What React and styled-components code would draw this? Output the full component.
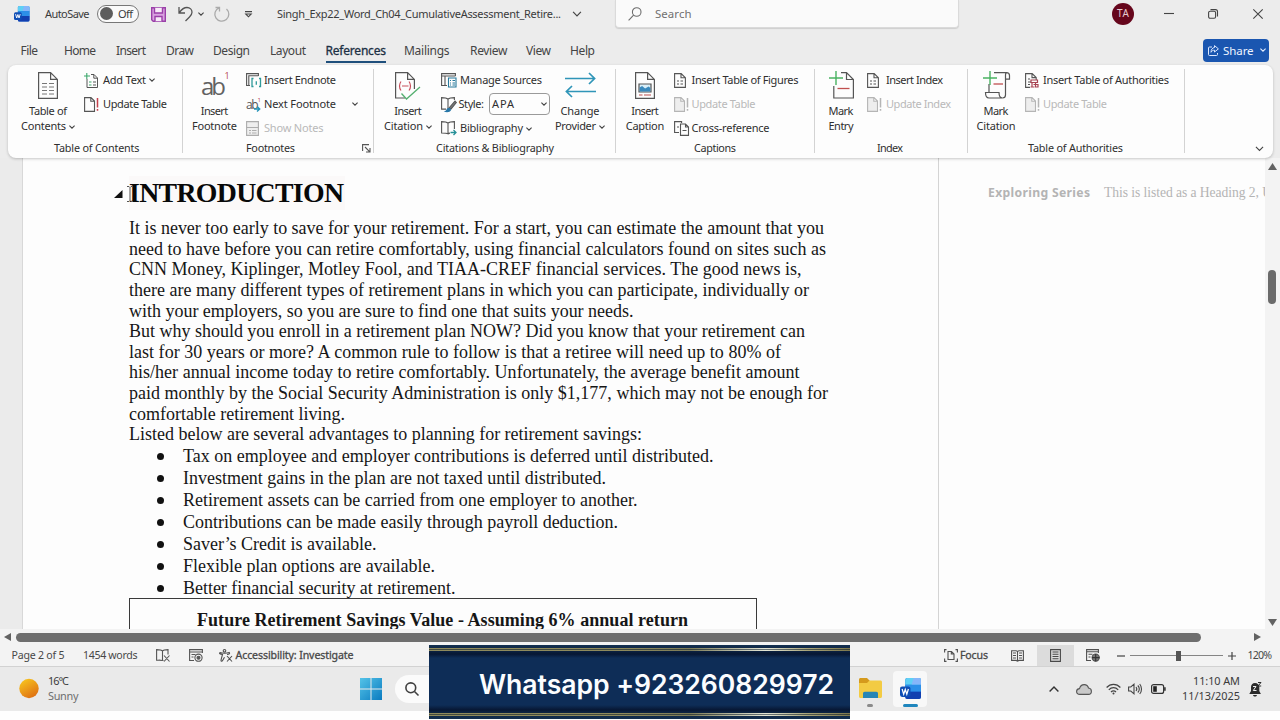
import { useLayoutEffect, useRef, useState } from "react";
import styled, { createGlobalStyle } from "styled-components";


const GlobalStyle = createGlobalStyle`
  * {
    box-sizing: border-box;
  }

  body {
    margin: 0;
    overflow: hidden;
    background: #ffffff;
    font-family: "Noto Sans", "Open Sans", sans-serif;
    font-size: 11px;
    color: #3b3b3b;
  }

  svg {
    display: block;
    flex: none;
    overflow: visible;
  }
`;

const FitBox = styled.span`
  display: block;
  flex: none;
  white-space: pre;
  margin-left: ${p => p.$ml || 0}px;
`;

// Tracks a run of text out (or in) so that it is exactly `w` pixels wide
const Fit = ({ w, ml, children }) => {
    const ref = useRef(null);
    const [spacing, setSpacing] = useState(0);

    useLayoutEffect(() => {
        const range = document.createRange();
        range.selectNodeContents(ref.current);
        const natural = range.getBoundingClientRect().width;
        setSpacing((w - natural) / (children.length - 1 || 1));
    }, []);

    return (
        <FitBox ref={ref} $ml={ml} style={{ width: w, letterSpacing: spacing }}>{children}</FitBox>
    );
};

const Window = styled.div`
  width: 1280px;
  height: 720px;
  position: relative;
  display: flex;
  flex-direction: column;
  overflow: hidden;
  background: #fefefe;
`;

const Header = styled.header`
  height: 158px;
  background: #ececec;
  flex: none;
`;

const TitleBar = styled.div`
  height: 36px;
  display: flex;
  align-items: flex-start;

  ${FitBox} {
    padding-bottom: 1px;
  }
`;

const TitleItem = styled.div`
  height: ${p => p.$h || 28}px;
  margin-left: ${p => p.$ml || 0}px;
  display: flex;
  align-items: center;
  flex: none;
`;

const Toggle = styled.div`
  width: 42px;
  height: 18px;
  border: 1px solid #777;
  border-radius: 9px;
  background: #fafafa;
  display: flex;
  align-items: center;
  padding-left: 2px;
`;

const ToggleKnob = styled.div`
  width: 13px;
  height: 13px;
  border-radius: 50%;
  background: #5d5d5d;
`;

const SearchBox = styled.div`
  width: 344px;
  height: 28px;
  margin-left: 33px;
  padding-left: 12px;
  display: flex;
  align-items: center;
  background: #fafafa;
  border: 1px solid #dadada;
  border-top: none;
  border-radius: 0 0 4px 4px;
  box-shadow: 0 1px 1px #cfcfcf;
  color: #707070;
  font-size: 11.4px;
`;

const Avatar = styled.div`
  width: 22px;
  height: 22px;
  border-radius: 50%;
  background: #66061c;
  color: #e6c9ce;
  display: flex;
  align-items: center;
  justify-content: center;
  font-size: 10px;
`;

const TabRow = styled.nav`
  height: 29px;
  display: flex;
  align-items: center;
  padding-left: 20.5px;
  font-size: 12px;
`;

const Tab = styled.div`
  height: 25px;
  margin-left: ${p => p.$ml || 0}px;
  padding-top: 4px;
  line-height: 18px;
  border-bottom: 2px solid ${p => (p.$active ? "#1f4f7c" : "transparent")};
  color: ${p => (p.$active ? "#1c3044" : "#444")};
  -webkit-text-stroke: ${p => (p.$active ? "0.3px" : "0")};
`;

const ShareButton = styled.button`
  width: 66px;
  height: 23px;
  margin: 0 11px 1px auto;
  padding: 0 0 0 5px;
  display: flex;
  align-items: center;
  border: none;
  border-radius: 4px;
  background: #1a56b0;
  color: #eef4ff;
  font: inherit;
  font-size: 11.5px;
`;

const Ribbon = styled.div`
  width: 1265px;
  height: 93px;
  margin-left: 8px;
  display: flex;
  background: #fdfdfd;
  border-radius: 8px;
  box-shadow: 0 1px 3px rgba(0, 0, 0, 0.22);
  color: #2f2f2f;
  position: relative;
  z-index: 1;

  ${FitBox} {
    padding-bottom: 2px;
  }
`;

const Group = styled.section`
  width: ${p => p.$w}px;
  padding-top: 3px;
  flex: none;
`;

const GroupBody = styled.div`
  height: 73px;
  padding-left: ${p => p.$pl}px;
  display: flex;
`;

const GroupLabel = styled.div`
  height: 15px;
  padding-left: ${p => p.$pl}px;
  display: flex;
  align-items: center;
  font-size: 10.8px;
`;

const Divider = styled.div`
  width: 1px;
  height: 84px;
  margin-top: 4px;
  background: #d3d3d3;
  flex: none;
`;

const BigButton = styled.div`
  width: ${p => p.$w}px;
  padding-top: 3px;
  display: flex;
  flex-direction: column;
  align-items: center;
  flex: none;
`;

const BigIcon = styled.div`
  height: 33px;
  padding-top: 1px;
  display: flex;
  align-items: flex-start;
`;

const BigLine = styled.div`
  height: 15px;
  display: flex;
  align-items: center;
`;

const Stack = styled.div`
  width: ${p => (p.$w ? p.$w + "px" : "auto")};
  margin-left: ${p => p.$ml}px;
  display: flex;
  flex-direction: column;
`;

const SmallButton = styled.div`
  height: 24.4px;
  display: flex;
  align-items: center;
  color: ${p => (p.$disabled ? "#b9b9b9" : "inherit")};
`;

const IconSlot = styled.div`
  width: 16px;
  flex: none;
`;

const Combo = styled.div`
  width: 61px;
  height: 22px;
  margin-left: 5px;
  padding-left: 2px;
  border: 1px solid #9a9a9a;
  border-radius: 4px;
  display: flex;
  align-items: center;
`;

const Workspace = styled.main`
  height: 471px;
  display: flex;
  flex: none;
`;

const Gutter = styled.div`
  width: 23px;
  background: #ebebeb;
  border-right: 1px solid #d8d8d8;
`;

const Page = styled.article`
  width: 916px;
  padding: 18px 0 0 106px;
  overflow: hidden;
  border-right: 1px solid #d4d4d4;
  background: #fdfdfd;
  font-family: "Liberation Serif", "Times New Roman", serif;
  font-size: 18px;
  color: #161616;
`;

const Heading = styled.h1`
  width: 216px;
  height: 34px;
  margin: 0 0 8px;
  position: relative;
  background: #fbf9f9;
  font-size: 27.8px;
  font-weight: 700;
  line-height: 34px;
  color: #080808;
`;

const CollapseMark = styled.svg`
  position: absolute;
  left: -15px;
  top: 14px;
`;

const TextCursor = styled.svg`
  position: absolute;
  left: -2px;
  top: 10px;
`;

const Line = styled.div`
  height: 20.63px;
  line-height: 21px;
`;

const Bullets = styled.ul`
  margin: 0;
  padding: 0;
  list-style: none;
`;

const Bullet = styled.li`
  height: 22px;
  display: flex;
  align-items: center;
  line-height: 22px;

  &::before {
    content: "";
    width: 7px;
    height: 7px;
    margin: 2px 19px 0 28px;
    border-radius: 50%;
    background: #111;
  }
`;

const TableTop = styled.div`
  width: 628px;
  height: 60px;
  margin-top: -1px;
  padding: 10px 0 0 67px;
  border: 1px solid #3a3a3a;
  font-weight: 700;
  line-height: 22px;
`;

const CommentPane = styled.aside`
  width: 326px;
  padding: 25px 0 0 49px;
  display: flex;
  overflow: hidden;
  background: #fdfdfd;
  color: #b4b4b4;
  line-height: 20px;
`;

const CommentAuthor = styled.div`
  font-size: 12.2px;
  font-weight: 700;
`;

const CommentText = styled.div`
  margin-left: 14px;
  font-family: "Liberation Serif", serif;
  font-size: 13.6px;
  line-height: 19px;
`;

const VScroll = styled.div`
  width: 15px;
  padding: 5px 0 3px 3px;
  display: flex;
  flex-direction: column;
  background: #f3f3f3;
`;

const VThumb = styled.div`
  width: 8px;
  height: 34px;
  margin: 100px 0 auto 0;
  border-radius: 4px;
  background: #6b6b6b;
`;

const HScroll = styled.div`
  height: 16px;
  padding-left: 4px;
  display: flex;
  align-items: center;
  background: #f3f3f3;
  flex: none;
`;

const HThumb = styled.div`
  width: 1185px;
  height: 9px;
  margin: 0 53px 0 5px;
  border-radius: 5px;
  background: #6e6e6e;
`;

const StatusBar = styled.div`
  height: 22px;
  padding-left: 11.5px;
  display: flex;
  align-items: center;
  background: #f3f3f3;
  border-bottom: 1px solid #d2d2d2;
  color: #484848;
  font-size: 10.6px;
  flex: none;

  ${FitBox} {
    padding-bottom: 1px;
  }
`;

const StatusItem = styled.div`
  margin-left: ${p => p.$ml || 0}px;
  -webkit-text-stroke: ${p => (p.$strong ? "0.3px" : "0")};
  flex: none;
`;

const ActiveView = styled.div`
  width: 37px;
  height: 21px;
  margin-left: 13px;
  display: flex;
  align-items: center;
  justify-content: center;
  background: #dcdcdc;
`;

const ZoomTrack = styled.div`
  width: 93px;
  height: 10px;
  margin-left: 5px;
  display: flex;
  align-items: center;
  background: linear-gradient(#858585, #858585) center / 100% 1px no-repeat;
`;

const ZoomThumb = styled.div`
  width: 5px;
  height: 10px;
  margin-left: 46px;
  background: #555;
`;

const Taskbar = styled.footer`
  height: 44px;
  padding-left: 19px;
  display: flex;
  align-items: center;
  background: #eaeaea;
  flex: none;
`;

const TaskItem = styled.div`
  margin-left: ${p => p.$ml || 0}px;
  flex: none;
`;

const TwoLines = styled.div`
  width: ${p => p.$w}px;
  margin-left: ${p => p.$ml}px;
  padding-bottom: 2px;
  display: flex;
  flex-direction: column;
  align-items: ${p => (p.$end ? "flex-end" : "flex-start")};
  line-height: 15px;
  font-size: 10.9px;
  flex: none;
`;

const Muted = styled.div`
  color: #6f6f6f;
`;

const SearchPill = styled.div`
  width: 60px;
  height: 28px;
  margin-left: 13px;
  padding-left: 10px;
  display: flex;
  align-items: center;
  border-radius: 14px;
  background: #fbfbfb;
`;

const TaskApp = styled.div`
  width: 34px;
  height: 36px;
  margin-left: ${p => p.$ml}px;
  padding-top: 7px;
  display: flex;
  flex-direction: column;
  align-items: center;
  justify-content: space-between;
  border-radius: 4px;
  background: ${p => (p.$active ? "#f8f8f8" : "transparent")};
  flex: none;
`;

const RunningMark = styled.div`
  width: ${p => (p.$active ? 15 : 6)}px;
  height: 3px;
  border-radius: 2px;
  background: ${p => (p.$active ? "#1f86bd" : "#8a8a8a")};
`;

const Banner = styled.div`
  position: absolute;
  left: 429px;
  top: 645px;
  width: 421px;
  height: 74px;
  padding: 3px 0;
  display: flex;
  flex-direction: column;
  justify-content: space-between;
  background: linear-gradient(
    #14304f 0, #10294a 3px, #0b2140 6px, #071733 9px, #0e2d57 13px,
    #0e2d57 60px, #071733 65px, #0b2140 67px, #14304f 74px
  );
  color: #fbfdff;
`;

const BannerText = styled.div`
  padding: 3px 0 0 50px;
  font-family: Inter, "Open Sans", sans-serif;
  font-size: 26.6px;
  font-weight: 600;
  line-height: 36px;
`;

const GoldRule = styled.div`
  height: 3px;
  display: flex;
  align-items: center;
  background: linear-gradient(90deg, #8f8a5c, #8f8a5c 45%, #7d7c58 62%, #e4e6d6 80%, #a8a377 90%, #7d774c);
`;

const GoldGroove = styled.div`
  flex: 1;
  height: 1px;
  background: rgba(8, 24, 40, 0.55);
`;

/* Icons */

const Caret = ({ color = "#444", w = 6 }) => (
    <svg width={w} height={w / 2 + 1} viewBox="0 0 6 4" fill="none" stroke={color} strokeWidth={w > 6 ? 0.8 : 1.1}>
        <path d="M.4.6 3 3.2 5.6.6" />
    </svg>
);

const WordLogo = ({ size }) => (
    <svg width={size} height={size} viewBox="0 0 20 20">
        <rect x="5" y="0" width="15" height="20" rx="2" fill="#1b6fd6" />
        <path d="M7 0h11a2 2 0 0 1 2 2v4.500H5V2a2 2 0 0 1 2-2z" fill="#5fd0f5" />
        <path d="M13 0h5a2 2 0 0 1 2 2v4.500h-9z" fill="#86b6fa" />
        <path d="M5 6.500h15V13H5z" fill="#2c8fe8" />
        <path d="M5 13h15v5a2 2 0 0 1-2 2H7a2 2 0 0 1-2-2z" fill="#123fb0" />
        <rect x="0" y="8" width="10" height="10" rx="2" fill="#0f4eb5" />
        <path d="m2 10.500 1.500 5L5 11l1.500 4.500 1.500-5" fill="none" stroke="#fff" strokeWidth="1.200" />
    </svg>
);

const SaveIcon = () => (
    <svg width="15" height="15" viewBox="0 0 15 15" fill="none" stroke="#9a3fa8" strokeWidth="1.4">
        <path d="M.7.7h13.600v13.600H2.200L.7 12.800z" fill="#d9a3e0" />
        <path d="M3.500.7v5.300h8V.7M4 14.300V9.500h7v4.800" fill="#f7eaf8" />
    </svg>
);

const UndoIcon = () => (
    <svg width="15" height="16" viewBox="0 0 15 16" fill="none" stroke="#555" strokeWidth="1.3">
        <path d="M1 1v6h6M1.300 6.700C3.500 3.500 6 1.500 9 1.500c3 0 5 2.300 5 4.800 0 2.200-1.200 3.400-2.500 4.700L7.500 15" />
    </svg>
);

const RedoIcon = () => (
    <svg width="16" height="16" viewBox="0 0 16 16" fill="none" stroke="#aaa" strokeWidth="1.3">
        <path d="M5 1.800A7 7 0 1 0 12.500 3M1.500 1.500H5.500V5.500" />
    </svg>
);

const CustomizeIcon = () => (
    <svg width="7" height="7" viewBox="0 0 7 7" fill="none" stroke="#444" strokeWidth="1.1">
        <path d="M0 .6h7M.8 3 3.500 5.800 6.200 3z" />
    </svg>
);

const Magnifier = () => (
    <svg width="14" height="14" viewBox="0 0 14 14" fill="none" stroke="#6c6c6c" strokeWidth="1.1">
        <circle cx="8.700" cy="5" r="4.300" />
        <path d="M5.600 8.200.6 13.300" />
    </svg>
);

const ShareIcon = () => (
    <svg width="11" height="11" viewBox="0 0 11 11" fill="none" stroke="#dce8ff" strokeWidth="1">
        <path d="M4 2H1.500a1 1 0 0 0-1 1v6.500a1 1 0 0 0 1 1h7a1 1 0 0 0 1-1V8" />
        <path d="M6.500.6 10.400 3.900 6.500 7V5.200C4.800 5.200 3.700 5.900 3 7.300c.1-2.800 1.300-4.500 3.500-4.800z" />
    </svg>
);

const ContentsIcon = () => (
    <svg width="20" height="27" viewBox="0 0 20 27" fill="none" stroke="#555" strokeWidth="1.2">
        <path d="M.6.600h12l6.800 6.800v19H.6zM12.600.600v6.800h6.800" />
        <path d="M4 11.500h5M4 15h5M4 18.500h5M4 22h5M11 11.500h5M11 15h5M11 18.500h5M11 22h5" stroke="#777" strokeWidth="1" />
    </svg>
);

const AddTextIcon = () => (
    <svg width="15" height="15" viewBox="0 0 15 15" fill="none" stroke="#555" strokeWidth="1">
        <path d="M7 1.500h3l3.500 3.500v9.500H3V6M9.800 1.500v3.700h3.700" />
        <path d="M2.800 0v6M0 3h6M5 9h2.500M5 12h2.500" stroke="#3aa76a" strokeWidth="1.1" />
        <path d="M9 9h3M9 12h3" />
    </svg>
);

const UpdateIcon = ({ disabled }) => (
    <svg width="15" height="15" viewBox="0 0 15 15" fill="none" stroke={disabled ? "#b5b5b5" : "#555"} strokeWidth="1.1">
        <path d="M.6.6h6.400l3.500 3.500v10.300H.6zM6.800.6v3.700h3.700" fill={disabled ? "#eee" : "none"} />
        <path d="M13.500 1v9.500M13.500 12v1.800" stroke={disabled ? "#b5b5b5" : "#c5404c"} strokeWidth="1.500" />
    </svg>
);

const SerialText = styled.text`
  font-family: "Open Sans", sans-serif;
  stroke: none;
`;

const FootnoteIcon = () => (
    <svg width="28" height="27" viewBox="0 0 28 27">
        <SerialText x="0" y="23" fontSize="24" fontWeight="400" textLength="25" fill="#626262">ab</SerialText>
        <SerialText x="23.500" y="6.500" fontSize="9" fill="#b64450">1</SerialText>
    </svg>
);

const EndnoteIcon = () => (
    <svg width="16" height="15" viewBox="0 0 16 15" fill="none" stroke="#555" strokeWidth="1.1">
        <path d="M4 12.500H.6V.6h11.800V3M2.800 12V2.800h9.600" />
        <path d="M7.500 5.500H6v8h1.500M13 5.500h1.500v8H13M10.300 8.300v3.500" stroke="#2f9a9a" strokeWidth="1.300" />
    </svg>
);

const NextNoteIcon = () => (
    <svg width="16" height="15" viewBox="0 0 16 15">
        <SerialText x="0" y="11.500" fontSize="12" textLength="12.500" fill="#555">ab</SerialText>
        <SerialText x="11.500" y="5" fontSize="6" fill="#b64450">1</SerialText>
        <path d="M8 12h5.500M11 9.500l2.700 2.500-2.700 2.500" fill="none" stroke="#2593b8" strokeWidth="1.400" />
    </svg>
);

const NotesIcon = () => (
    <svg width="13" height="15" viewBox="0 0 13 15" fill="none" stroke="#adadad" strokeWidth="1.1">
        <path d="M.6.6h11.800v13.800H.6z" fill="#efefef" />
        <path d="M.6 6.500h11.800M3 9.500h2M6 9.500h4.500M3 12h2M6 12h4.500" />
    </svg>
);

const LauncherIcon = () => (
    <svg width="9" height="9" viewBox="0 0 9 9" fill="none" stroke="#555" strokeWidth="1.1">
        <path d="M.6 7V.6H7M3 3l4.800 4.800M8 4v4H4" />
    </svg>
);

const CitationIcon = () => (
    <svg width="26" height="28" viewBox="0 0 26 28" fill="none" stroke="#555" strokeWidth="1.2">
        <path d="M10 26H.6V.600h12l6.800 6.800V17M12.600.600v6.800h6.800" />
        <path d="M6 9.500c-2 2.500-2 6.500 0 9M14 9.500c2 2.500 2 6.500 0 9M7 14h6.500" stroke="#c8505c" />
        <path d="m6.500 21.500 5 5.500L25 15" stroke="#55b070" strokeWidth="1.300" />
    </svg>
);

const SourcesIcon = () => (
    <svg width="16" height="15" viewBox="0 0 16 15" fill="none" stroke="#555" strokeWidth="1.1">
        <path d="M6 12.500H.6V.6h13.800V3M.6 3h13.800M4 3v9.500" />
        <path d="M7.500 5h7.500v9H7.500z" stroke="#27799c" />
        <path d="M9 7.500h1M11.500 7.500h2.500M9 10h1M11.500 10h2.500M9 12h1M11.500 12h2.500" stroke="#27799c" />
    </svg>
);

const StyleIcon = () => (
    <svg width="16" height="15" viewBox="0 0 16 15" fill="none" stroke="#555" strokeWidth="1.1">
        <path d="M7 2.500V13M7 2.200C5.500.8 3 .6.6.6v11.500H5M7 2.200C8.500.8 11 .6 13.400.6V3" />
        <path d="m8 11 6-7 1.300 1.500L10 12z" fill="#777" />
        <path d="M4.500 14.500c1-.5 1.300-1.500 1.800-2.300.8-1 2.500-1 3 .2.500 1.600-1.800 2.600-4.800 2.100z" fill="#2777a8" stroke="#2777a8" />
    </svg>
);

const BibliographyIcon = () => (
    <svg width="16" height="15" viewBox="0 0 16 15" fill="none" stroke="#555" strokeWidth="1.1">
        <path d="M7 2.200v10.600C5.500 12 3 12 .6 12V.6C3 .6 5.500.8 7 2.200zM7 2.200C8.500.8 11 .6 13.400.6V8M7 12.800c.6-.4 1.200-.6 2-.7" />
        <path d="M9.500 11.500H15M12.500 9l2.500 2.500-2.500 2.500" stroke="#279098" strokeWidth="1.300" />
    </svg>
);

const SwapIcon = () => (
    <svg width="31" height="26" viewBox="0 0 31 26" fill="none" stroke="#2f95b8" strokeWidth="1.7">
        <path d="M0 6.500h29M24 1l5.600 5.500L24 12M31 19.500H2M7 14l-5.600 5.500L7 25" />
    </svg>
);

const CaptionIcon = () => (
    <svg width="20" height="27" viewBox="0 0 20 27" fill="none" stroke="#555" strokeWidth="1.2">
        <path d="M.6.600h12l6.800 6.800v19H.6zM12.600.600v6.800h6.800" />
        <path d="M4 12h12v8H4z" fill="#d8eef8" />
        <path d="M4.600 19.400v-4l2.500-1.500 3 2.500 3.500-2 1.800 1.500v3.500z" fill="#3989bd" stroke="none" />
        <path d="M4 23h3.500M9 23h7" stroke="#bb4e4e" />
    </svg>
);

const FiguresIcon = () => (
    <svg width="12" height="15" viewBox="0 0 12 15" fill="none" stroke="#555" strokeWidth="1.1">
        <path d="M.6.6h6.600l4.200 4.200v9.600H.6zM7 .6v4.200h4.400M3 8h2M6.500 8H9M3 11h2M6.500 11H9" />
    </svg>
);

const CrossRefIcon = () => (
    <svg width="15" height="15" viewBox="0 0 15 15" fill="none" stroke="#555" strokeWidth="1.1">
        <path d="M5 11.500H.6V.6h7V2M3 6h2" />
        <path d="M6.500 3h5l3 3v8.400h-8zM11.500 3v3h3M8.500 9.500h4" />
    </svg>
);

const MarkEntryIcon = () => (
    <svg width="25" height="28" viewBox="0 1 25 28" fill="none" stroke="#555" strokeWidth="1.2">
        <path d="M12 1.600h5.500l6.900 6.900v18.500H4.800V15M17.500 1.600v6.900h6.900" />
        <path d="M7 0v14M0 7h14" stroke="#49b261" strokeWidth="1.400" />
        <path d="M8.500 17.500h12" stroke="#c0504f" strokeWidth="1.300" />
    </svg>
);

const MarkCitationIcon = () => (
    <svg width="27" height="28" viewBox="0 1 27 28" fill="none" stroke="#555" strokeWidth="1.2">
        <path d="M11 1.600h12.500c2 0 3 1.400 3 3v3.600h-4V24c0 2-1 3-3 3M22.500 8V4c0-1.500.4-2.400 1.400-2.400M6 13v8.500" />
        <path d="M2.500 21.500h13.500c0 3 .8 5.500 3.500 5.500H6c-2.500 0-3.500-2.500-3.500-5.500z" />
        <path d="M7 0v14M0 7h14" stroke="#49b261" strokeWidth="1.400" />
        <path d="M10.500 13h9.500" stroke="#c0504f" strokeWidth="1.300" />
    </svg>
);

const AuthoritiesIcon = () => (
    <svg width="14" height="15" viewBox="0 0 14 15" fill="none" stroke="#555" strokeWidth="1.1">
        <path d="M5 14.400H.6V.6h6.600l4 4V7M7 .6v4h4M3 6h2M3 9h3M3 11.500h2" />
        <path d="M6 7h6.500v2.500H6zM7 9.500v4M10.500 9.500v4M5.500 14h4M8.500 11.500h4.500v2.500h-3" stroke="#a84352" strokeWidth="1.200" />
    </svg>
);

const Arrow = ({ d, w, h }) => (
    <svg width={w} height={h} viewBox={`0 0 ${w} ${h}`} fill="#626262">
        <path d={d} />
    </svg>
);

const ProofIcon = () => (
    <svg width="14" height="13" viewBox="0 0 14 13" fill="none" stroke="#555" strokeWidth="1.1">
        <path d="M6.500 2v9.500M6.500 11.500C5 11 3 11.200.6 11.200V.6C3 .6 5.500.6 6.500 2 7.500.6 9.500.6 12 .6v5M6.500 11.500h1M8 6.500l5.500 6M13.500 6.500 8 12.500" />
    </svg>
);

const MacroIcon = () => (
    <svg width="14" height="13" viewBox="0 0 14 13" fill="none" stroke="#555" strokeWidth="1.1">
        <path d="M5 11.500H.6V.6h12.800V4M.6 3h12.800M2.500 5.500h4M2.500 8h2" />
        <circle cx="9.500" cy="8.700" r="3.600" />
        <circle cx="9.500" cy="8.700" r="1.500" fill="#555" />
    </svg>
);

const AccessIcon = () => (
    <svg width="14" height="13" viewBox="0 0 14 13" fill="none" stroke="#505050" strokeWidth="1.1">
        <circle cx="5.500" cy="1.800" r="1.300" />
        <path d="M.8 3.500C0 4.500 1 5.300 3.500 5.500L2 11c-.2 1.300 1 1.600 1.600.5L5.500 8.300M.8 3.500c3 1 6.500 1 9.500 0 .8 1 0 1.800-2.300 2M8 7l5 5.500M13 7l-5 5.500" />
    </svg>
);

const FocusIcon = () => (
    <svg width="14" height="13" viewBox="0 0 14 13" fill="none" stroke="#505050" strokeWidth="1.100">
        <path d="M2.500.6H.6v3M11.500.6h1.900v3M2.500 12.400H.6v-3M11.500 12.400h1.900v-3" />
        <path d="M4 2.500h3.500L10 5v5.500H4zM7.300 2.500V5H10" />
    </svg>
);

const ReadIcon = () => (
    <svg width="13" height="12" viewBox="0 0 13 12" fill="none" stroke="#505050" strokeWidth="1.1">
        <path d="M6.500 1.500v9.500M.6.800h4.500l1.400.7 1.400-.7h4.500v9.600H7.900l-1.400.8-1.400-.8H.6zM2 3h3M2 5.500h3M2 8h3M8 3h3M8 5.500h3M8 8h3" />
    </svg>
);

const PrintIcon = () => (
    <svg width="11" height="13" viewBox="0 0 11 13" fill="none" stroke="#484848" strokeWidth="1.1">
        <path d="M.6.6h9.800v11.800H.6zM2.500 3h6M2.500 5.200h6M2.500 7.500h6M2.500 9.800h6" />
    </svg>
);

const WebIcon = () => (
    <svg width="14" height="13" viewBox="0 0 14 13" fill="none" stroke="#505050" strokeWidth="1.1">
        <path d="M5 11.500H.6V.6h11.800V4M.6 2.800h11.800M2.500 5.300h4M2.500 8h2" />
        <circle cx="9.700" cy="8.600" r="3.600" fill="#777" />
        <path d="M6 8.600h7.400M9.700 5v7.300" stroke="#333" />
    </svg>
);

const SunIcon = () => (
    <svg width="20" height="20" viewBox="0 0 20 20">
        <defs>
            <linearGradient id="sun" x1="0.200" y1="0" x2="0.800" y2="1">
                <stop offset="0" stopColor="#f8c51f" />
                <stop offset="1" stopColor="#dd6b12" />
            </linearGradient>
        </defs>
        <circle cx="10" cy="9.500" r="9.700" fill="url(#sun)" />
    </svg>
);

const WindowsIcon = () => (
    <svg width="22" height="22" viewBox="0 0 22 22">
        <defs>
            <linearGradient id="win" x1="0" y1="0" x2="1" y2="1" gradientUnits="objectBoundingBox">
                <stop offset="0" stopColor="#54c3e8" />
                <stop offset="1" stopColor="#0a7bc0" />
            </linearGradient>
        </defs>
        <path d="M0 0h10.500v10.500H0zM11.500 0H22v10.500H11.500zM0 11.500h10.500V22H0zM11.500 11.500H22V22H11.500z" fill="url(#win)" />
    </svg>
);

const TaskSearchIcon = () => (
    <svg width="14" height="14" viewBox="0 0 14 14" fill="none" stroke="#404040" strokeWidth="1.6">
        <circle cx="5.800" cy="5.800" r="4.900" />
        <path d="m9.500 9.500 4 4" />
    </svg>
);

const FolderIcon = () => (
    <svg width="23" height="20" viewBox="0 0 23 20">
        <path d="M0 1.500C0 .7.700 0 1.500 0H8l2.500 2.500v4H0z" fill="#d59a1c" />
        <path d="M0 5h8l2.500-2.500h11c.8 0 1.500.7 1.500 1.500v14.500c0 .8-.7 1.500-1.500 1.500h-20C.7 20 0 19.300 0 18.500z" fill="#f3cb43" />
        <path d="M4 20v-4.500c0-1 .7-1.700 1.700-1.700h11.600c1 0 1.700.7 1.700 1.700V20z" fill="#2785b5" />
    </svg>
);

const ChevronUp = () => (
    <svg width="10" height="6" viewBox="0 0 10 6" fill="none" stroke="#333" strokeWidth="1.4">
        <path d="M.6 5.400 5 1l4.400 4.400" />
    </svg>
);

const CloudIcon = () => (
    <svg width="16" height="11" viewBox="0 0 16 11" fill="#c9c9c9" stroke="#555" strokeWidth="1.100">
        <path d="M4 10.400C2 10.400.6 9.200.6 7.500S2 4.700 3.500 4.600C4.200 2 6 .6 8.200.6c2.200 0 3.800 1.300 4.300 3.400 1.700.2 2.900 1.400 2.900 3.200s-1.300 3.200-3 3.200z" />
    </svg>
);

const WifiIcon = () => (
    <svg width="15" height="12" viewBox="0 0 15 12" fill="none" stroke="#444" strokeWidth="1.2">
        <path d="M.6 4.500C4.500.2 10.500.2 14.400 4.500M2.800 6.800c2.700-3 6.700-3 9.400 0M5 9c1.500-1.600 3.500-1.600 5 0" />
        <circle cx="7.500" cy="10.600" r="1" fill="#444" stroke="none" />
    </svg>
);

const SpeakerIcon = () => (
    <svg width="14" height="12" viewBox="0 0 14 12" fill="none" stroke="#444" strokeWidth="1.1">
        <path d="M.6 4h2.200L6 1.200v9.600L2.800 8H.6zM8 4c1 1.200 1 2.800 0 4M9.800 2.500c2 2 2 5 0 7M11.700 1c2.400 2.800 2.400 7.200 0 10" />
    </svg>
);

const BatteryIcon = () => (
    <svg width="15" height="10" viewBox="0 0 15 10" fill="none" stroke="#333" strokeWidth="1.200">
        <rect x=".6" y=".6" width="12" height="8.800" rx="2" />
        <path d="M2.200 2.200h3.600v5.600H2.200z" fill="#222" stroke="none" />
        <path d="M13.900 3.200v3.600" strokeWidth="1.600" />
    </svg>
);

const BellIcon = () => (
    <svg width="13" height="15" viewBox="0 0 13 15">
        <path d="M6 1C3.500 1 2 2.800 2 5v4L.3 12h11.600L10.300 9V5C10.300 2.800 8.500 1 6 1zM4 13h4c-.3 1-1 1.600-2 1.600S4.300 14 4 13z" fill="#2b2b2b" />
        <path d="M4 4.500h3L4.300 8.500h3.200" stroke="#eee" fill="none" />
        <path d="M9 .5h3l-3 3.500h3.200" stroke="#2b2b2b" fill="none" />
    </svg>
);

/* Data */

const TABS = [
    ["File", 17.5, 0], ["Home", 32, 26], ["Insert", 30, 20], ["Draw", 28, 20],
    ["Design", 37, 19], ["Layout", 36, 20], ["References", 60.5, 19.5], ["Mailings", 45.500, 18],
    ["Review", 37.5, 20.5], ["View", 25, 18.5], ["Help", 25, 19],
];

const BODY = [
    ["It is never too early to save for your retirement. For a start, you can estimate the amount that you", 695],
    ["need to have before you can retire comfortably, using financial calculators found on sites such as", 697],
    ["CNN Money, Kiplinger, Motley Fool, and TIAA-CREF financial services. The good news is,", 672.5],
    ["there are many different types of retirement plans in which you can participate, individually or", 680],
    ["with your employers, so you are sure to find one that suits your needs.", 504.5],
    ["But why should you enroll in a retirement plan NOW? Did you know that your retirement can", 676],
    ["last for 30 years or more? A common rule to follow is that a retiree will need up to 80% of", 652],
    ["his/her annual income today to retire comfortably. Unfortunately, the average benefit amount", 670.5],
    ["paid monthly by the Social Security Administration is only $1,177, which may not be enough for", 699],
    ["comfortable retirement living.", 216],
    ["Listed below are several advantages to planning for retirement savings:", 513],
];

const ADVANTAGES = [
    ["Tax on employee and employer contributions is deferred until distributed.", 530.5],
    ["Investment gains in the plan are not taxed until distributed.", 423],
    ["Retirement assets can be carried from one employer to another.", 454.5],
    ["Contributions can be made easily through payroll deduction.", 435],
    ["Saver’s Credit is available.", 193.5],
    ["Flexible plan options are available.", 252],
    ["Better financial security at retirement.", 272.5],
];

/* Parts */

const Big = ({ w, icon, top, topW, bottom, bottomW, caret }) => (
    <BigButton $w={w}>
        <BigIcon>{icon}</BigIcon>
        <BigLine><Fit w={topW}>{top}</Fit></BigLine>
        <BigLine>
            <Fit w={bottomW}>{bottom}</Fit>
            {caret && <TitleItem $h={15} $ml={3}><Caret /></TitleItem>}
        </BigLine>
    </BigButton>
);

const Small = ({ icon, w, caret, disabled, gap = 3, children }) => (
    <SmallButton $disabled={disabled}>
        <IconSlot>{icon}</IconSlot>
        <Fit w={w} ml={gap}>{children}</Fit>
        {caret && <TitleItem $h={20} $ml={caret}><Caret /></TitleItem>}
    </SmallButton>
);

const WindowTitle = () => (
    <TitleBar>
        <TitleItem $ml={14}><WordLogo size={15.500} /></TitleItem>
        <TitleItem $ml={15.500}><Fit w={44.500}>AutoSave</Fit></TitleItem>
        <TitleItem $ml={7.500} $h={27}>
            <Toggle><ToggleKnob /><Fit w={15} ml={5}>Off</Fit></Toggle>
        </TitleItem>
        <TitleItem $ml={12}><SaveIcon /></TitleItem>
        <TitleItem $ml={12} $h={27}><UndoIcon /></TitleItem>
        <TitleItem $ml={5} $h={27}><Caret /></TitleItem>
        <TitleItem $ml={10}><RedoIcon /></TitleItem>
        <TitleItem $ml={15}><CustomizeIcon /></TitleItem>
        <TitleItem $ml={25}><Fit w={284}>Singh_Exp22_Word_Ch04_CumulativeAssessment_Retire...</Fit></TitleItem>
        <TitleItem $ml={11}><Caret w={10} /></TitleItem>
        <SearchBox><Magnifier /><Fit w={36.500} ml={13}>Search</Fit></SearchBox>
        <TitleItem $ml={153} $h={27}><Avatar><Fit w={12}>TA</Fit></Avatar></TitleItem>
        <TitleItem $ml={29.500}>
            <svg width="10" height="10" fill="none" stroke="#444" strokeWidth="1.100"><path d="M0 4.500h10" /></svg>
        </TitleItem>
        <TitleItem $ml={34.500}>
            <svg width="10" height="10" viewBox="0 0 10 10" fill="none" stroke="#444" strokeWidth="1.100">
                <rect x=".6" y="2.300" width="7" height="7" rx="1.500" />
                <path d="M2.500.6h5c1.200 0 2 .8 2 2v5" />
            </svg>
        </TitleItem>
        <TitleItem $ml={35}>
            <svg width="10" height="10" fill="none" stroke="#444" strokeWidth="1.100"><path d="m.3.300 9.400 9.400M9.700.300.3 9.700" /></svg>
        </TitleItem>
    </TitleBar>
);

const RibbonTabs = () => (
    <TabRow>
        {TABS.map(([name, w, ml]) => (
            <Tab key={name} $ml={ml} $active={name === "References"}><Fit w={w}>{name}</Fit></Tab>
        ))}
        <ShareButton>
            <ShareIcon />
            <Fit w={30.500} ml={4}>Share</Fit>
            <TitleItem $h={20} $ml={6}><Caret color="#e5eeff" /></TitleItem>
        </ShareButton>
    </TabRow>
);

const ReferencesRibbon = () => (
    <Ribbon>
        <Group $w={174}>
            <GroupBody $pl={8}>
                <Big w={64} icon={<ContentsIcon />} top="Table of" topW={38} bottom="Contents" bottomW={45} caret />
                <Stack $ml={4}>
                    <Small icon={<AddTextIcon />} w={43} caret={3}>Add Text</Small>
                    <Small icon={<UpdateIcon />} w={64}>Update Table</Small>
                </Stack>
            </GroupBody>
            <GroupLabel $pl={46}><Fit w={85.500}>Table of Contents</Fit></GroupLabel>
        </Group>
        <Divider />
        <Group $w={190}>
            <GroupBody $pl={7}>
                <Big w={49} icon={<FootnoteIcon />} top="Insert" topW={27.500} bottom="Footnote" bottomW={45} />
                <Stack $ml={7}>
                    <Small icon={<EndnoteIcon />} w={72} gap={2}>Insert Endnote</Small>
                    <Small icon={<NextNoteIcon />} w={72} gap={2} caret={16}>Next Footnote</Small>
                    <Small icon={<NotesIcon />} w={59.500} gap={2} disabled>Show Notes</Small>
                </Stack>
            </GroupBody>
            <GroupLabel $pl={63}>
                <Fit w={49}>Footnotes</Fit>
                <TitleItem $h={15} $ml={67}><LauncherIcon /></TitleItem>
            </GroupLabel>
        </Group>
        <Divider />
        <Group $w={241}>
            <GroupBody $pl={8}>
                <Big w={52} icon={<CitationIcon />} top="Insert" topW={27.500} bottom="Citation" bottomW={39} caret />
                <Stack $ml={7} $w={110}>
                    <Small icon={<SourcesIcon />} w={82}>Manage Sources</Small>
                    <SmallButton>
                        <IconSlot><StyleIcon /></IconSlot>
                        <Fit w={25.500} ml={1.500}>Style:</Fit>
                        <Combo>
                            <Fit w={22}>APA</Fit>
                            <TitleItem $h={20} $ml={27}><Caret /></TitleItem>
                        </Combo>
                    </SmallButton>
                    <Small icon={<BibliographyIcon />} w={63} caret={3}>Bibliography</Small>
                </Stack>
                <Big w={58} icon={<SwapIcon />} top="Change" topW={39} bottom="Provider" bottomW={41} caret />
            </GroupBody>
            <GroupLabel $pl={62}><Fit w={118}>Citations &amp; Bibliography</Fit></GroupLabel>
        </Group>
        <Divider />
        <Group $w={198}>
            <GroupBody $pl={8}>
                <Big w={42} icon={<CaptionIcon />} top="Insert" topW={27.500} bottom="Caption" bottomW={38.500} />
                <Stack $ml={8}>
                    <Small icon={<FiguresIcon />} w={107} gap={1.500}>Insert Table of Figures</Small>
                    <Small icon={<UpdateIcon disabled />} w={64} gap={1.500} disabled>Update Table</Small>
                    <Small icon={<CrossRefIcon />} w={78} gap={1.500}>Cross-reference</Small>
                </Stack>
            </GroupBody>
            <GroupLabel $pl={78}><Fit w={42}>Captions</Fit></GroupLabel>
        </Group>
        <Divider />
        <Group $w={152}>
            <GroupBody $pl={8}>
                <Big w={36} icon={<MarkEntryIcon />} top="Mark" topW={25} bottom="Entry" bottomW={25} />
                <Stack $ml={8}>
                    <Small icon={<FiguresIcon />} w={57}>Insert Index</Small>
                    <Small icon={<UpdateIcon disabled />} w={65} disabled>Update Index</Small>
                </Stack>
            </GroupBody>
            <GroupLabel $pl={62}><Fit w={26}>Index</Fit></GroupLabel>
        </Group>
        <Divider />
        <Group $w={216}>
            <GroupBody $pl={8}>
                <Big w={40} icon={<MarkCitationIcon />} top="Mark" topW={25} bottom="Citation" bottomW={39} />
                <Stack $ml={9}>
                    <Small icon={<AuthoritiesIcon />} w={126} gap={2}>Insert Table of Authorities</Small>
                    <Small icon={<UpdateIcon disabled />} w={64} gap={2} disabled>Update Table</Small>
                </Stack>
            </GroupBody>
            <GroupLabel $pl={60}><Fit w={95}>Table of Authorities</Fit></GroupLabel>
        </Group>
        <Divider />
        <Group $w={80}>
            <GroupBody $pl={0} />
            <GroupLabel $pl={70}><TitleItem $h={9}><Caret w={9} /></TitleItem></GroupLabel>
        </Group>
    </Ribbon>
);

const Document = () => (
    <Workspace>
        <Gutter />
        <Page>
            <Heading>
                <CollapseMark width="9" height="8"><path d="M8.500 0v8H0z" fill="#111" /></CollapseMark>
                <Fit w={215}>INTRODUCTION</Fit>
                <TextCursor width="6" height="16" fill="none" stroke="#555">
                    <path d="M0 .5h2l1 1 1-1h2M3 1.500v13M0 15.500h2l1-1 1 1h2" />
                </TextCursor>
            </Heading>
            {BODY.map(([text, w]) => <Line key={text}><Fit w={w}>{text}</Fit></Line>)}
            <Bullets>
                {ADVANTAGES.map(([text, w]) => <Bullet key={text}><Fit w={w}>{text}</Fit></Bullet>)}
            </Bullets>
            <TableTop><Fit w={491}>Future Retirement Savings Value - Assuming 6% annual return</Fit></TableTop>
        </Page>
        <CommentPane>
            <CommentAuthor><Fit w={102}>Exploring Series</Fit></CommentAuthor>
            <CommentText><Fit w={168}>This is listed as a Heading 2, U</Fit></CommentText>
        </CommentPane>
        <VScroll>
            <Arrow w={9} h={7} d="M4.500 0 9 7H0z" />
            <VThumb />
            <Arrow w={9} h={7} d="M4.500 7 9 0H0z" />
        </VScroll>
    </Workspace>
);

const Status = () => (
    <StatusBar>
        <Fit w={53}>Page 2 of 5</Fit>
        <Fit w={54.500} ml={18.500}>1454 words</Fit>
        <StatusItem $ml={18}><ProofIcon /></StatusItem>
        <StatusItem $ml={19}><MacroIcon /></StatusItem>
        <StatusItem $ml={16}><AccessIcon /></StatusItem>
        <StatusItem $ml={3} $strong><Fit w={118}>Accessibility: Investigate</Fit></StatusItem>
        <StatusItem $ml={590.500}><FocusIcon /></StatusItem>
        <StatusItem $ml={2} $strong><Fit w={28}>Focus</Fit></StatusItem>
        <StatusItem $ml={23}><ReadIcon /></StatusItem>
        <ActiveView><PrintIcon /></ActiveView>
        <StatusItem $ml={12}><WebIcon /></StatusItem>
        <StatusItem $ml={17}>
            <svg width="8" height="8" stroke="#444" strokeWidth="1.200"><path d="M0 4h8" /></svg>
        </StatusItem>
        <ZoomTrack><ZoomThumb /></ZoomTrack>
        <StatusItem $ml={4.500}>
            <svg width="8" height="8" stroke="#444" strokeWidth="1.200"><path d="M0 4h8M4 0v8" /></svg>
        </StatusItem>
        <StatusItem $ml={12}><Fit w={24.500}>120%</Fit></StatusItem>
    </StatusBar>
);

const WindowsTaskbar = () => (
    <Taskbar>
        <SunIcon />
        <TwoLines $w={32} $ml={9}>
            <Fit w={21}>16°C</Fit>
            <Muted><Fit w={30.500}>Sunny</Fit></Muted>
        </TwoLines>
        <TaskItem $ml={280}><WindowsIcon /></TaskItem>
        <SearchPill><TaskSearchIcon /></SearchPill>
        <TaskApp $ml={398}><FolderIcon /><RunningMark /></TaskApp>
        <TaskApp $ml={6} $active><WordLogo size={21} /><RunningMark $active /></TaskApp>
        <TaskItem $ml={122}><ChevronUp /></TaskItem>
        <TaskItem $ml={17}><CloudIcon /></TaskItem>
        <TaskItem $ml={14}><WifiIcon /></TaskItem>
        <TaskItem $ml={7}><SpeakerIcon /></TaskItem>
        <TaskItem $ml={9}><BatteryIcon /></TaskItem>
        <TwoLines $w={60} $ml={14} $end>
            <Fit w={47}>11:10 AM</Fit>
            <Fit w={58}>11/13/2025</Fit>
        </TwoLines>
        <TaskItem $ml={9}><BellIcon /></TaskItem>
    </Taskbar>
);

const App = () => {

    return (
        <Window>
            <GlobalStyle />
            <Header>
                <WindowTitle />
                <RibbonTabs />
                <ReferencesRibbon />
            </Header>
            <Document />
            <HScroll>
                <Arrow w={7} h={8} d="M0 4 7 0v8z" />
                <HThumb />
                <Arrow w={7} h={8} d="M7 4 0 0v8z" />
            </HScroll>
            <Status />
            <WindowsTaskbar />
            <Banner>
                <GoldRule><GoldGroove /></GoldRule>
                <BannerText><Fit w={355}>Whatsapp +923260829972</Fit></BannerText>
                <GoldRule><GoldGroove /></GoldRule>
            </Banner>
        </Window>
    )
}

export default App;
